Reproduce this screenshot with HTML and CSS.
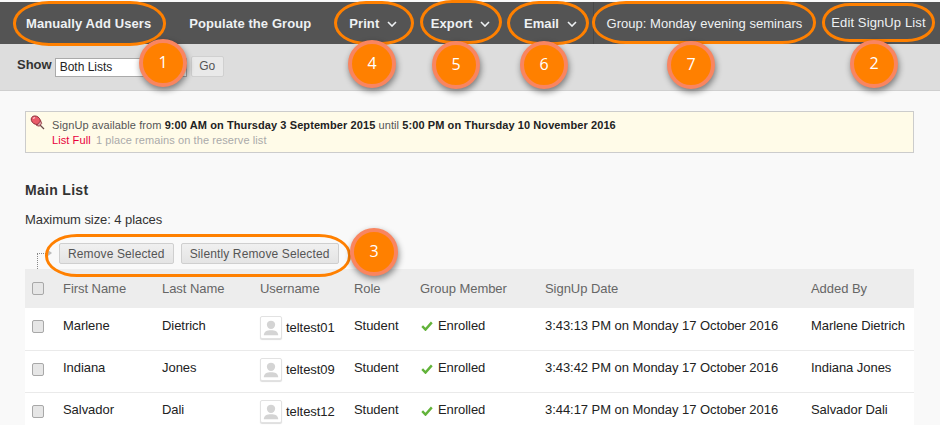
FILE: index.html
```html
<!DOCTYPE html>
<html lang="en">
<head>
<meta charset="utf-8">
<title>Group: Monday evening seminars</title>
<link rel="stylesheet" href="styles.css">
</head>
<body>
<nav class="topbar">
  <span class="nav-item">Manually Add Users</span>
  <span class="nav-item">Populate the Group</span>
  <span class="nav-item menu first-menu">Print<svg class="chev" viewBox="0 0 10 6"><path d="M1 1l4 4 4-4"/></svg></span>
  <span class="nav-item menu">Export<svg class="chev" viewBox="0 0 10 6"><path d="M1 1l4 4 4-4"/></svg></span>
  <span class="nav-item menu">Email<svg class="chev" viewBox="0 0 10 6"><path d="M1 1l4 4 4-4"/></svg></span>
  <span class="nav-group">Group: Monday evening seminars</span>
  <span class="nav-edit">Edit SignUp List</span>
</nav>
<div class="filterbar">
  <label class="show-label" for="show">Show</label>
  <select class="show-select" id="show"><option>Both Lists</option></select>
  <button class="go-btn" type="button">Go</button>
</div>
<main class="content">
  <div class="notice">
    <svg class="pin" viewBox="0 0 15 15">
      <path d="M9.500 9.500l4.500 4.500" stroke="#6b4a4a" stroke-width="1.300" fill="none"/>
      <ellipse cx="5.800" cy="5.200" rx="4.900" ry="3.900" transform="rotate(35 5.800 5.200)" fill="#ea5a68" stroke="#8a2a35" stroke-width=".9"/>
      <path d="M6.500 10.500l4.200-4.700 1 2.600-2.300 2.800z" fill="#d9a0a6" stroke="#8a2a35" stroke-width=".8"/>
      <path d="M3 3.500l2-1" stroke="#fbd0d4" stroke-width="1.200" fill="none"/>
    </svg>
    <div class="notice-text">
      <div>SignUp available from <b>9:00 AM on Thursday 3 September 2015</b> until <b>5:00 PM on Thursday 10 November 2016</b></div>
      <div class="notice-status"><span class="full">List Full</span> <span class="remain">1 place remains on the reserve list</span></div>
    </div>
  </div>
  <h2 class="list-title">Main List</h2>
  <p class="list-size">Maximum size: 4 places</p>
  <div class="actions">
    <span class="tree"></span>
    <span class="tree-arrow"></span>
    <button class="act-btn" type="button">Remove Selected</button>
    <button class="act-btn" type="button">Silently Remove Selected</button>
  </div>
  <table class="list">
    <colgroup><col class="c0"><col class="c1"><col class="c2"><col class="c3"><col class="c4"><col class="c5"><col class="c6"><col class="c7"></colgroup>
    <thead>
      <tr><th><span class="cb"></span></th><th>First Name</th><th>Last Name</th><th>Username</th><th>Role</th><th>Group Member</th><th>SignUp Date</th><th>Added By</th></tr>
    </thead>
    <tbody>
      <tr><td><span class="cb"></span></td><td>Marlene</td><td>Dietrich</td>
        <td><span class="user"><span class="avatar"><svg viewBox="0 0 20 21"><circle cx="10" cy="7.500" r="4.600"/><path d="M2 19c0-4 3.500-5.500 8-5.500s8 1.500 8 5.500z"/></svg></span>teltest01</span></td>
        <td>Student</td><td><span class="enrolled"><svg class="tick" viewBox="0 0 12 10"><path d="M1.200 5.200l3.300 3.400 6.300-7.200"/></svg>Enrolled</span></td><td>3:43:13 PM on Monday 17 October 2016</td><td>Marlene Dietrich</td></tr>
      <tr><td><span class="cb"></span></td><td>Indiana</td><td>Jones</td>
        <td><span class="user"><span class="avatar"><svg viewBox="0 0 20 21"><circle cx="10" cy="7.500" r="4.600"/><path d="M2 19c0-4 3.500-5.500 8-5.500s8 1.500 8 5.500z"/></svg></span>teltest09</span></td>
        <td>Student</td><td><span class="enrolled"><svg class="tick" viewBox="0 0 12 10"><path d="M1.200 5.200l3.300 3.400 6.300-7.200"/></svg>Enrolled</span></td><td>3:43:42 PM on Monday 17 October 2016</td><td>Indiana Jones</td></tr>
      <tr><td><span class="cb"></span></td><td>Salvador</td><td>Dali</td>
        <td><span class="user"><span class="avatar"><svg viewBox="0 0 20 21"><circle cx="10" cy="7.500" r="4.600"/><path d="M2 19c0-4 3.500-5.500 8-5.500s8 1.500 8 5.500z"/></svg></span>teltest12</span></td>
        <td>Student</td><td><span class="enrolled"><svg class="tick" viewBox="0 0 12 10"><path d="M1.200 5.200l3.300 3.400 6.300-7.200"/></svg>Enrolled</span></td><td>3:44:17 PM on Monday 17 October 2016</td><td>Salvador Dali</td></tr>
    </tbody>
  </table>
</main>

<span class="ring r1"></span>
<span class="ring r4"></span>
<span class="ring r5"></span>
<span class="ring r6"></span>
<span class="ring r7"></span>
<span class="ring r2"></span>
<span class="ring r3"></span>
<span class="badge b1">1</span>
<span class="badge b4">4</span>
<span class="badge b5">5</span>
<span class="badge b6">6</span>
<span class="badge b7">7</span>
<span class="badge b2">2</span>
<span class="badge b3">3</span>
</body>
</html>
```
FILE: styles.css
```css
* { box-sizing: border-box; }
html, body { margin: 0; height: 425px; overflow: hidden; }
body {
  position: relative;
  background: #f9f9f9;
  font-family: "Liberation Sans", Arial, sans-serif;
  font-size: 13px;
  color: #222;
}
.topbar {
  display: flex;
  align-items: center;
  height: 42px;
  margin-top: 2px;
  padding-left: 26px;
  background: #545454;
  color: #eef1f3;
  font-weight: bold;
  font-size: 13px;
}
.nav-item { margin-right: 38px; white-space: nowrap; letter-spacing: .08px; }
.nav-item.menu { margin-right: 33.5px; display: flex; align-items: center; }
.chev { width: 10px; height: 6px; margin-left: 8px; margin-top: 2px; fill: none; stroke: #eef1f3; stroke-width: 1.6; }
.nav-group {
  margin-left: -18px;
  padding: 0 21px 0 13px;
  height: 42px;
  line-height: 43px;
  border-left: 1px solid #484848;
  font-weight: normal;
  word-spacing: .2px;
  white-space: nowrap;
}
.nav-edit { margin-left: 8px; font-weight: normal; white-space: nowrap; padding-bottom: 2px; letter-spacing: .12px; }
.filterbar {
  display: flex;
  align-items: center;
  height: 47px;
  padding: 0 0 2px 17px;
  background: #dddddd;
  border-bottom: 1px solid #cfcfcf;
}
.show-label { font-weight: bold; color: #333; margin-right: 3px; margin-top: -3px; }
.show-select {
  width: 132px;
  height: 19px;
  margin: 2px 4px 0 0;
  padding: 0;
  font: 12px "Liberation Sans", Arial, sans-serif;
  background: #fff;
  border: 1px solid #aaa;
  color: #222;
}
.go-btn {
  width: 33px;
  height: 21px;
  padding: 0;
  font: 12px "Liberation Sans", Arial, sans-serif;
  color: #555;
  background: #e9e9e9;
  border: 1px solid #d0d0d0;
  border-radius: 2px;
}
.content { padding: 20px 26px 0 25px; }
.notice {
  display: flex;
  height: 42px;
  padding: 3px 0 0 4px;
  background: #fffbe8;
  border: 1px solid #cccccc;
  font-size: 11px;
  letter-spacing: .09px;
  line-height: 15px;
  color: #555;
}
.notice b { color: #222; }
.pin { width: 15px; height: 15px; margin-right: 7px; flex: none; }
.notice-text { padding-top: 3px; }
.full { color: #e8003c; }
.remain { color: #aaa; margin-left: 2px; }
.list-title { margin: 29px 0 0; font-size: 14px; line-height: 16px; color: #333; letter-spacing: .3px; }
.list-size { margin: 14px 0 0; line-height: 16px; color: #333; letter-spacing: -.07px; }
.actions { display: flex; align-items: flex-start; height: 26px; margin-top: 15px; padding-left: 12px; }
.tree { width: 11px; height: 16px; margin-top: 10px; border-top: 1px dotted #888; border-left: 1px dotted #888; flex: none; }
.tree-arrow {
  width: 0; height: 0; margin: 7px 7px 0 0; flex: none;
  border-left: 4px solid #bbb; border-top: 3px solid transparent; border-bottom: 3px solid transparent;
}
.act-btn {
  height: 21px;
  margin: 0 7px 0 0;
  padding: 0 8px;
  font: 12px "Liberation Sans", Arial, sans-serif;
  letter-spacing: .13px;
  color: #555;
  background: linear-gradient(#f0f0f0, #e4e4e4);
  border: 1px solid #cfcfcf;
  border-radius: 2px;
}
.list { width: 889px; border-collapse: collapse; table-layout: fixed; background: #fff; letter-spacing: -.05px; }
.c0 { width: 38px; } .c1 { width: 99px; } .c2 { width: 98px; } .c3 { width: 94px; }
.c4 { width: 66px; } .c5 { width: 125px; } .c6 { width: 266px; } .c7 { width: 103px; }
.list th {
  height: 39px; padding: 0; text-align: left; font-weight: normal; color: #666; background: #ededed;
}
.list td { height: 42px; padding: 0 0 7px; color: #222; border-bottom: 1px solid #eaeaea; white-space: nowrap; }
.cb {
  display: block;
  width: 12px; height: 13px; margin-left: 7px;
  background: #e6e6e6;
  border: 1px solid #a8a8a8;
  border-radius: 2px;
}
td .cb { margin-top: 3px; }
.user { display: flex; align-items: center; position: relative; top: 5px; margin-top: -6px; }
.avatar {
  width: 22px; height: 23px; margin-right: 4px; padding: 1px;
  background: #fff; border: 1px solid #e2e2e2; border-radius: 2px; box-shadow: 0 1px 1px #ddd;
}
.avatar svg { display: block; width: 18px; height: 19px; fill: #d4d4d4; }
.enrolled { display: flex; align-items: center; }
.tick { width: 12px; height: 10px; margin: 2px 5px 0 1px; fill: none; stroke: #62b33a; stroke-width: 2.4; }

.ring { position: absolute; border: 3px solid #ff8000; }
.r1 { left: 13px; top: 1px; width: 153px; height: 45px; border-radius: 36px / 22px; }
.r4 { left: 334px; top: 1px; width: 80px; height: 44px; border-radius: 32px / 22px; }
.r5 { left: 420px; top: 0; width: 82px; height: 44px; border-radius: 32px / 22px; }
.r6 { left: 507px; top: 1px; width: 82px; height: 44px; border-radius: 32px / 22px; }
.r7 { left: 592px; top: 1px; width: 224px; height: 43px; border-radius: 34px / 21px; }
.r2 { left: 822px; top: 3px; width: 113px; height: 39px; border-radius: 28px / 19px; }
.r3 { left: 45px; top: 234px; width: 306px; height: 43px; border-radius: 32px / 21px; }
.badge {
  position: absolute;
  width: 48px; height: 48px;
  line-height: 39px;
  text-align: center;
  color: #fff;
  font-family: "Open Sans", sans-serif;
  font-size: 16px;
  background: #ff8000;
  border: 4px solid #f98560;
  border-radius: 50%;
  box-shadow: 1px 3px 6px rgba(0, 0, 0, .45);
}
.b1 { left: 139px; top: 39px; }
.b4 { left: 348px; top: 40px; }
.b5 { left: 432px; top: 41px; }
.b6 { left: 520px; top: 41px; }
.b7 { left: 667px; top: 41px; }
.b2 { left: 850px; top: 40px; }
.b3 { left: 350px; top: 228px; }
```
